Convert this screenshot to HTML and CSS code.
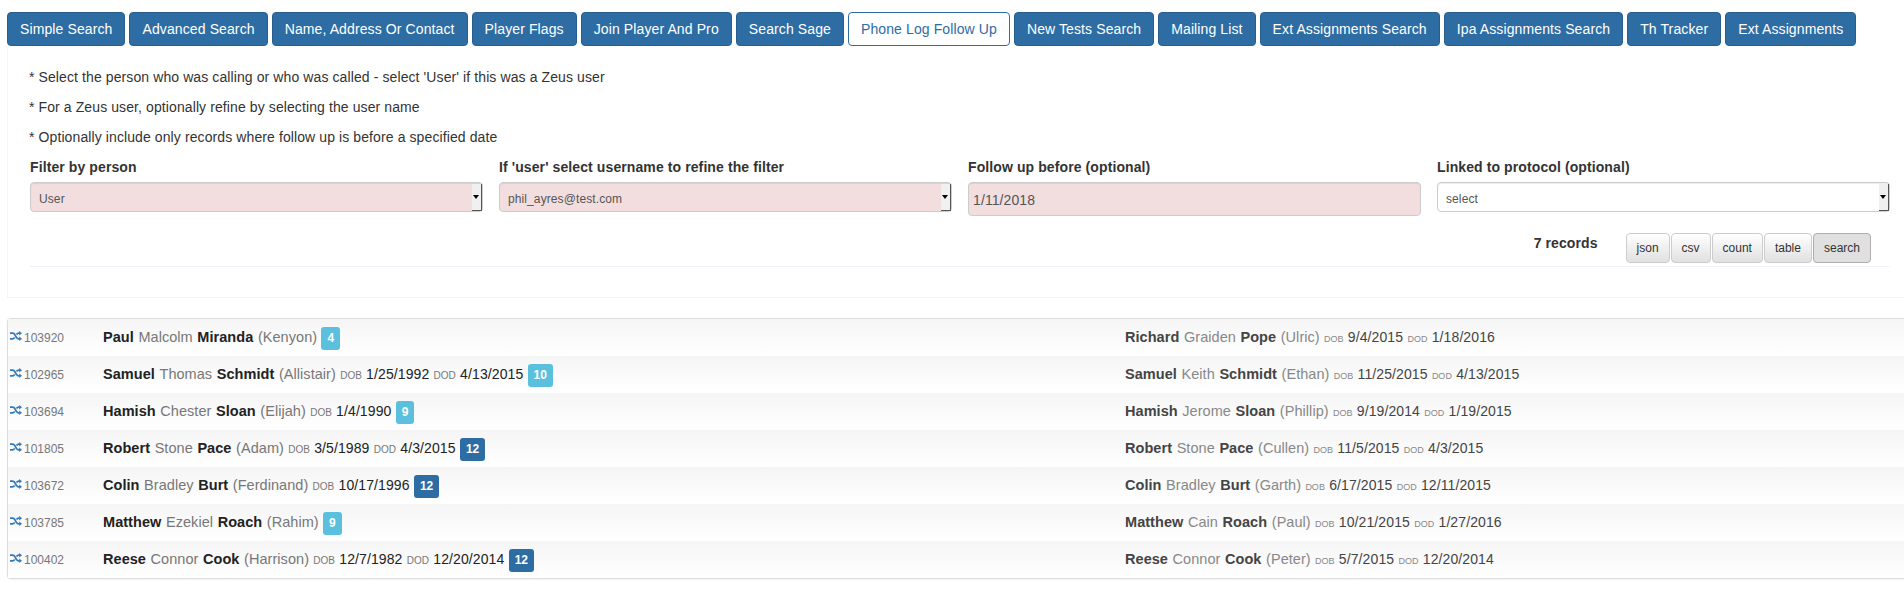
FILE: index.html

```html
<!DOCTYPE html>
<html lang="en">
<head>
  <meta charset="UTF-8" />
  <title>Phone Log Follow Up</title>
  <link rel="stylesheet" href="styles.css">
</head>
<body>
  <nav class="tabs">
    <a class="tab">Simple Search</a>
    <a class="tab">Advanced Search</a>
    <a class="tab">Name, Address Or Contact</a>
    <a class="tab">Player Flags</a>
    <a class="tab">Join Player And Pro</a>
    <a class="tab">Search Sage</a>
    <a class="tab active">Phone Log Follow Up</a>
    <a class="tab">New Tests Search</a>
    <a class="tab">Mailing List</a>
    <a class="tab">Ext Assignments Search</a>
    <a class="tab">Ipa Assignments Search</a>
    <a class="tab">Th Tracker</a>
    <a class="tab">Ext Assignments</a>
  </nav>

  <section class="filter-panel">
    <p>* Select the person who was calling or who was called - select 'User' if this was a Zeus user</p>
    <p>* For a Zeus user, optionally refine by selecting the user name</p>
    <p>* Optionally include only records where follow up is before a specified date</p>

    <div class="filters">
      <div class="field">
        <label>Filter by person</label>
        <div class="select flagged"><span>User</span><i class="arrow"></i></div>
      </div>
      <div class="field">
        <label>If 'user' select username to refine the filter</label>
        <div class="select flagged"><span>phil_ayres@test.com</span><i class="arrow"></i></div>
      </div>
      <div class="field">
        <label>Follow up before (optional)</label>
        <input class="date flagged" type="text" value="1/11/2018" />
      </div>
      <div class="field">
        <label>Linked to protocol (optional)</label>
        <div class="select"><span>select</span><i class="arrow"></i></div>
      </div>
    </div>

    <div class="actions">
      <strong class="count">7 records</strong>
      <div class="btns">
        <button>json</button>
        <button>csv</button>
        <button>count</button>
        <button>table</button>
        <button class="pressed">search</button>
      </div>
    </div>
    <hr />
  </section>

  <section class="results">
    <div class="row">
      <div class="rid"><svg class="shuffle" viewBox="0 0 12 10"><path d="M0 2.2h2.4c1.6 0 2.4 1 3.2 2.8s1.600 2.800 3.200 2.800h1M0 7.800h2.400c1 0 1.700-.5 2.300-1.400M6.500 3.600c.6-.9 1.300-1.400 2.300-1.400h1"/><path class="head" d="M9.200 0 12 2.200 9.200 4.400zM9.200 5.600 12 7.800 9.200 10z"/></svg>103920</div>
      <div class="who"><span class="name"><b>Paul</b> <em>Malcolm</em> <b>Miranda</b> <em>(Kenyon)</em></span> <span class="badge info">4</span></div>
      <div class="rel"><span class="name"><b>Richard</b> <em>Graiden</em> <b>Pope</b> <em>(Ulric)</em></span> <small>DOB</small> 9/4/2015 <small>DOD</small> 1/18/2016</div>
    </div>
    <div class="row">
      <div class="rid"><svg class="shuffle" viewBox="0 0 12 10"><path d="M0 2.2h2.4c1.6 0 2.4 1 3.2 2.8s1.600 2.800 3.200 2.800h1M0 7.800h2.400c1 0 1.700-.5 2.300-1.400M6.500 3.600c.6-.9 1.300-1.400 2.300-1.400h1"/><path class="head" d="M9.200 0 12 2.200 9.200 4.400zM9.200 5.600 12 7.800 9.200 10z"/></svg>102965</div>
      <div class="who"><span class="name"><b>Samuel</b> <em>Thomas</em> <b>Schmidt</b> <em>(Allistair)</em></span> <small>DOB</small> 1/25/1992 <small>DOD</small> 4/13/2015 <span class="badge info">10</span></div>
      <div class="rel"><span class="name"><b>Samuel</b> <em>Keith</em> <b>Schmidt</b> <em>(Ethan)</em></span> <small>DOB</small> 11/25/2015 <small>DOD</small> 4/13/2015</div>
    </div>
    <div class="row">
      <div class="rid"><svg class="shuffle" viewBox="0 0 12 10"><path d="M0 2.2h2.4c1.6 0 2.4 1 3.2 2.8s1.600 2.800 3.200 2.800h1M0 7.800h2.400c1 0 1.700-.5 2.300-1.400M6.500 3.600c.6-.9 1.300-1.400 2.300-1.400h1"/><path class="head" d="M9.200 0 12 2.200 9.200 4.400zM9.200 5.600 12 7.800 9.200 10z"/></svg>103694</div>
      <div class="who"><span class="name"><b>Hamish</b> <em>Chester</em> <b>Sloan</b> <em>(Elijah)</em></span> <small>DOB</small> 1/4/1990 <span class="badge info">9</span></div>
      <div class="rel"><span class="name"><b>Hamish</b> <em>Jerome</em> <b>Sloan</b> <em>(Phillip)</em></span> <small>DOB</small> 9/19/2014 <small>DOD</small> 1/19/2015</div>
    </div>
    <div class="row">
      <div class="rid"><svg class="shuffle" viewBox="0 0 12 10"><path d="M0 2.2h2.4c1.6 0 2.4 1 3.2 2.8s1.600 2.800 3.200 2.800h1M0 7.800h2.400c1 0 1.700-.5 2.300-1.400M6.500 3.600c.6-.9 1.300-1.400 2.300-1.400h1"/><path class="head" d="M9.200 0 12 2.200 9.200 4.400zM9.200 5.600 12 7.800 9.200 10z"/></svg>101805</div>
      <div class="who"><span class="name"><b>Robert</b> <em>Stone</em> <b>Pace</b> <em>(Adam)</em></span> <small>DOB</small> 3/5/1989 <small>DOD</small> 4/3/2015 <span class="badge primary">12</span></div>
      <div class="rel"><span class="name"><b>Robert</b> <em>Stone</em> <b>Pace</b> <em>(Cullen)</em></span> <small>DOB</small> 11/5/2015 <small>DOD</small> 4/3/2015</div>
    </div>
    <div class="row">
      <div class="rid"><svg class="shuffle" viewBox="0 0 12 10"><path d="M0 2.2h2.4c1.6 0 2.4 1 3.2 2.8s1.600 2.800 3.200 2.800h1M0 7.800h2.400c1 0 1.700-.5 2.300-1.400M6.500 3.600c.6-.9 1.300-1.400 2.300-1.400h1"/><path class="head" d="M9.200 0 12 2.200 9.200 4.400zM9.200 5.600 12 7.800 9.200 10z"/></svg>103672</div>
      <div class="who"><span class="name"><b>Colin</b> <em>Bradley</em> <b>Burt</b> <em>(Ferdinand)</em></span> <small>DOB</small> 10/17/1996 <span class="badge primary">12</span></div>
      <div class="rel"><span class="name"><b>Colin</b> <em>Bradley</em> <b>Burt</b> <em>(Garth)</em></span> <small>DOB</small> 6/17/2015 <small>DOD</small> 12/11/2015</div>
    </div>
    <div class="row">
      <div class="rid"><svg class="shuffle" viewBox="0 0 12 10"><path d="M0 2.2h2.4c1.6 0 2.4 1 3.2 2.8s1.600 2.800 3.200 2.800h1M0 7.800h2.400c1 0 1.700-.5 2.300-1.400M6.500 3.600c.6-.9 1.300-1.400 2.300-1.400h1"/><path class="head" d="M9.200 0 12 2.200 9.200 4.400zM9.200 5.600 12 7.800 9.200 10z"/></svg>103785</div>
      <div class="who"><span class="name"><b>Matthew</b> <em>Ezekiel</em> <b>Roach</b> <em>(Rahim)</em></span> <span class="badge info">9</span></div>
      <div class="rel"><span class="name"><b>Matthew</b> <em>Cain</em> <b>Roach</b> <em>(Paul)</em></span> <small>DOB</small> 10/21/2015 <small>DOD</small> 1/27/2016</div>
    </div>
    <div class="row">
      <div class="rid"><svg class="shuffle" viewBox="0 0 12 10"><path d="M0 2.2h2.4c1.6 0 2.4 1 3.2 2.8s1.600 2.800 3.200 2.800h1M0 7.800h2.400c1 0 1.700-.5 2.300-1.400M6.500 3.600c.6-.9 1.300-1.400 2.300-1.400h1"/><path class="head" d="M9.200 0 12 2.200 9.200 4.400zM9.200 5.600 12 7.800 9.200 10z"/></svg>100402</div>
      <div class="who"><span class="name"><b>Reese</b> <em>Connor</em> <b>Cook</b> <em>(Harrison)</em></span> <small>DOB</small> 12/7/1982 <small>DOD</small> 12/20/2014 <span class="badge primary">12</span></div>
      <div class="rel"><span class="name"><b>Reese</b> <em>Connor</em> <b>Cook</b> <em>(Peter)</em></span> <small>DOB</small> 5/7/2015 <small>DOD</small> 12/20/2014</div>
    </div>
  </section>
</body>
</html>
```

FILE: styles.css

```css
html, body { height: 100%; overflow: hidden; }
body { margin: 0; padding: 12px 0 0 7px; box-sizing: border-box; background: #fff; color: #333; font: 14px/20px "Liberation Sans", Arial, sans-serif; letter-spacing: .1px; }

.tabs { display: flex; gap: 4px; }
.tab { padding: 6px 12px; border: 1px solid #285e8e; border-radius: 4px; background: #2e6da4; color: #fff; white-space: nowrap; letter-spacing: .11px; }
.tab.active { background: #fff; border-color: #2e6da4; color: #2e6da4; }

.filter-panel { padding: 21px 15px 30px 22px; border: 1px solid #f5f5f5; border-top: 0; border-right: 0; }
.filter-panel p { margin: 0 0 10px; margin-left: -1px; }
.filters { display: grid; grid-template-columns: repeat(4, 453px); gap: 16px; }
.field label { display: block; margin-bottom: 5px; font-weight: bold; }

.select { display: flex; align-items: center; position: relative; box-sizing: border-box; height: 30px; padding: 3px 0 0 8px; border: 1px solid #ccc; border-radius: 4px; background: #fff; color: #555; font-size: 12px; box-shadow: inset 0 1px 1px rgba(0,0,0,.075); }
.flagged { background: #f2dede; }
.arrow { position: absolute; top: 1px; right: 0; bottom: 0; width: 9px; background: #f0f0f0; border-right: 1px solid #555; border-bottom: 1px solid #555; }
.arrow::after { content: ""; position: absolute; top: 11px; left: 1px; border: 3.5px solid transparent; border-top: 4px solid #000; border-bottom: 0; }

.date { display: block; box-sizing: border-box; width: 100%; height: 34px; padding: 1px 4px 0; border: 1px solid #ccc; border-radius: 4px; color: #555; font: 14px "Liberation Sans", Arial, sans-serif; letter-spacing: .1px; box-shadow: inset 0 1px 1px rgba(0,0,0,.075); }

.actions { display: flex; justify-content: flex-end; gap: 28px; margin: 17px 18px 0 0; }
.count { color: #333; }
.btns { display: flex; gap: 1px; }
.btns button { height: 30px; padding: 0 10px; border: 1px solid #ccc; border-radius: 4px; background: linear-gradient(#fff, #e0e0e0); color: #333; font: 12px "Liberation Sans", Arial, sans-serif; }
.btns .pressed { background: #e0e0e0; border-color: #adadad; }
hr { height: 0; margin: 3px 0 0; border: 0; border-top: 1px solid #eeeef8; }

.results { margin-top: 20px; border: 1px solid #ddd; border-right: 0; border-radius: 4px 0 0 4px; box-shadow: 0 1px 2px rgba(0,0,0,.05); }
.row { display: grid; grid-template-columns: 95px 1022px 1fr; align-items: center; height: 37px; background: linear-gradient(#f5f5f5, #fff); word-spacing: .3px; }
.rid { display: flex; align-items: center; padding-left: 2px; color: #777; font-size: 12px; letter-spacing: 0; }
.shuffle { width: 12px; height: 10px; margin: -3px 2px 0 0; }
.shuffle path { fill: none; stroke: #337ab7; stroke-width: 1.800; }
.shuffle .head { fill: #337ab7; stroke: none; }
.name { word-spacing: .6px; }
b, em { font-size: 14.5px; letter-spacing: .05px; }
em { font-style: normal; color: #777; }
small { color: #777; font-size: 10px; letter-spacing: 0; }
.who, .who b { color: #222; }
.rel, .rel b { color: #444; }
.rel em, .rel small { color: #888; }
.rel small { font-size: 9px; }
.badge { display: inline-block; height: 23px; padding: 0 6px; border-radius: 3px; color: #fff; font-size: 12px; font-weight: bold; line-height: 23px; letter-spacing: 0; vertical-align: middle; margin-top: 1px; }
.badge.info { background: #5bc0de; }
.badge.primary { background: #2e6da4; }
```
